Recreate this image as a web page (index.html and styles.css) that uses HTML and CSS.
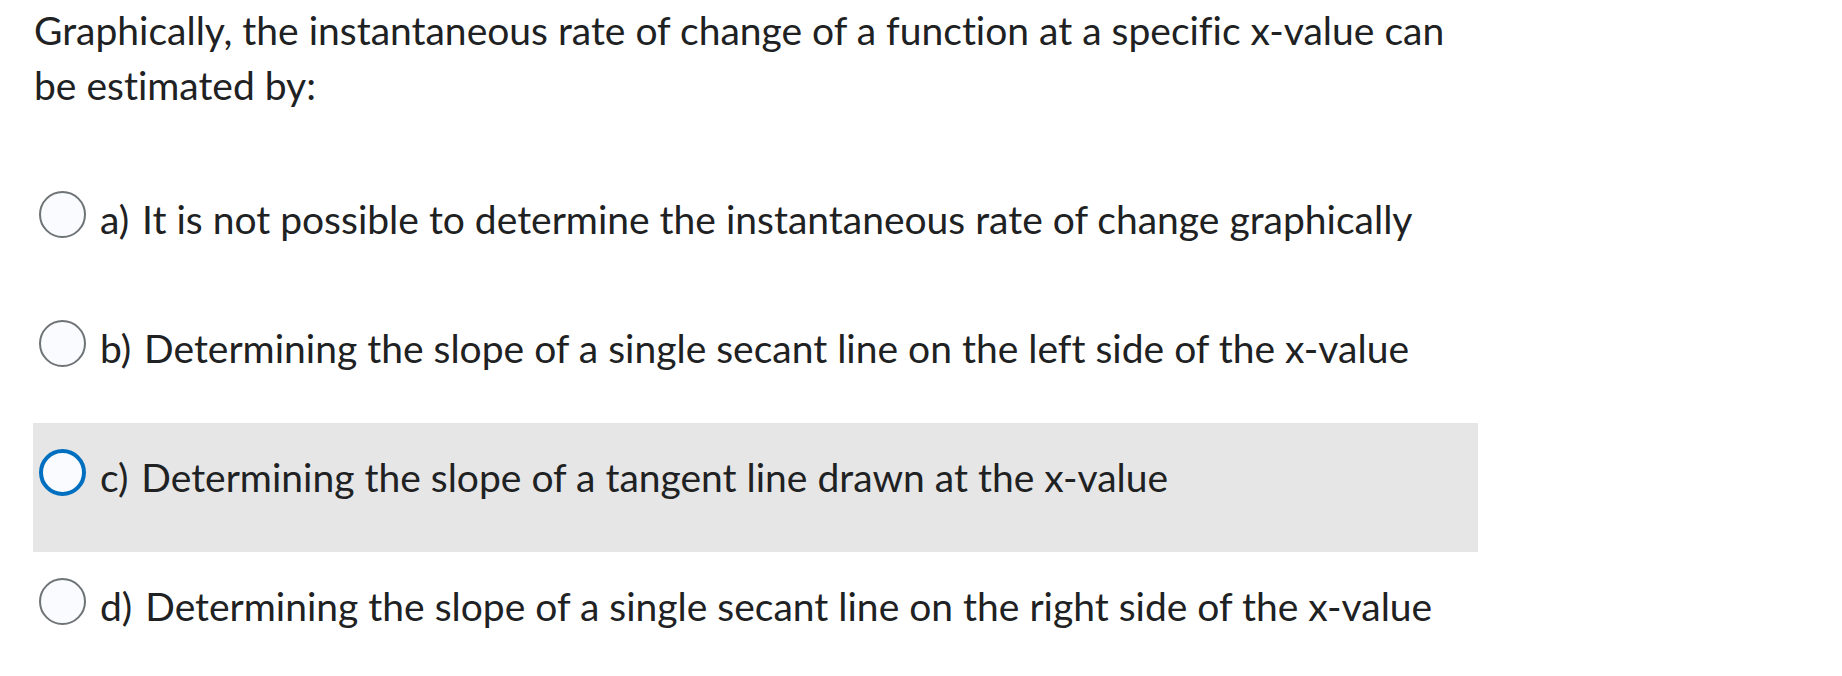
FILE: index.html
```html
<!DOCTYPE html>
<html lang="en">
<head>
<meta charset="utf-8">
<title>Question</title>
<link rel="stylesheet" href="styles.css">
</head>
<body>
<div class="quiz">
  <p class="question">Graphically, the instantaneous rate of change of a function at a specific x-value can be estimated by:</p>
  <div class="options">
    <label class="option"><span class="radio"></span><span class="label"><span class="letter">a)</span> It is not possible to determine the instantaneous rate of change graphically</span></label>
    <label class="option"><span class="radio"></span><span class="label"><span class="letter">b)</span> Determining the slope of a single secant line on the left side of the x-value</span></label>
    <label class="option option-hover"><span class="radio radio-focus"></span><span class="label"><span class="letter">c)</span> Determining the slope of a tangent line drawn at the x-value</span></label>
    <label class="option"><span class="radio"></span><span class="label"><span class="letter">d)</span> Determining the slope of a single secant line on the right side of the x-value</span></label>
  </div>
</div>
</body>
</html>
```

FILE: styles.css
```css
html, body {
  margin: 0;
  padding: 0;
  background: #ffffff;
}

body {
  font-family: Lato, "Noto Sans", sans-serif;
  color: #202122;
  font-variant-ligatures: none;
}

.quiz {
  padding: 3px 0 0 34px;
  width: 1444px;
}

.question {
  margin: 0;
  font-size: 39px;
  line-height: 55px;
  width: 1430px;
}

.options {
  margin-top: 52px;
  display: flex;
  flex-direction: column;
}

.option {
  display: flex;
  align-items: flex-start;
  gap: 14px;
  height: 129px;
  box-sizing: border-box;
  padding: 26px 0 0 6px;
  margin-left: -1px;
}

.option-hover {
  background: #e6e6e6;
}

.radio {
  flex: none;
  width: 47px;
  height: 47px;
  box-sizing: border-box;
  border-radius: 50%;
  border: 2px solid #6e7376;
  background: #f9fbff;
}

.radio-focus {
  border: 4px solid #006fbf;
}

.label {
  font-size: 39px;
  line-height: 55px;
  margin-top: 1px;
}

.letter {
  margin-right: 3px;
}
```
